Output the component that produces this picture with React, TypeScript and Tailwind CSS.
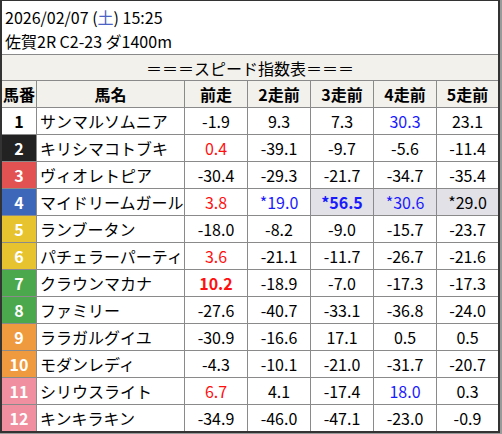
type Cell = { v: string; c?: "red" | "blue"; b?: boolean; hl?: boolean };

type Horse = { no: number; name: string; bg: string; fg: string; runs: Cell[] };

const horses: Horse[] = [
  { no: 1, name: "サンマルソムニア", bg: "bg-white", fg: "text-black", runs: [{ v: "-1.9" }, { v: "9.3" }, { v: "7.3" }, { v: "30.3", c: "blue" }, { v: "23.1" }] },
  { no: 2, name: "キリシマコトブキ", bg: "bg-[#222222]", fg: "text-white", runs: [{ v: "0.4", c: "red" }, { v: "-39.1" }, { v: "-9.7" }, { v: "-5.6" }, { v: "-11.4" }] },
  { no: 3, name: "ヴィオレトピア", bg: "bg-[#e25252]", fg: "text-white", runs: [{ v: "-30.4" }, { v: "-29.3" }, { v: "-21.7" }, { v: "-34.7" }, { v: "-35.4" }] },
  { no: 4, name: "マイドリームガール", bg: "bg-[#3d68ba]", fg: "text-white", runs: [{ v: "3.8", c: "red" }, { v: "*19.0", c: "blue" }, { v: "*56.5", c: "blue", b: true, hl: true }, { v: "*30.6", c: "blue", hl: true }, { v: "*29.0", hl: true }] },
  { no: 5, name: "ランブータン", bg: "bg-[#e6c32f]", fg: "text-white", runs: [{ v: "-18.0" }, { v: "-8.2" }, { v: "-9.0" }, { v: "-15.7" }, { v: "-23.7" }] },
  { no: 6, name: "パチェラーパーティ", bg: "bg-[#e6c32f]", fg: "text-white", runs: [{ v: "3.6", c: "red" }, { v: "-21.1" }, { v: "-11.7" }, { v: "-26.7" }, { v: "-21.6" }] },
  { no: 7, name: "クラウンマカナ", bg: "bg-[#4ca84c]", fg: "text-white", runs: [{ v: "10.2", c: "red", b: true }, { v: "-18.9" }, { v: "-7.0" }, { v: "-17.3" }, { v: "-17.3" }] },
  { no: 8, name: "ファミリー", bg: "bg-[#4ca84c]", fg: "text-white", runs: [{ v: "-27.6" }, { v: "-40.7" }, { v: "-33.1" }, { v: "-36.8" }, { v: "-24.0" }] },
  { no: 9, name: "ララガルグイユ", bg: "bg-[#ef9a3e]", fg: "text-white", runs: [{ v: "-30.9" }, { v: "-16.6" }, { v: "17.1" }, { v: "0.5" }, { v: "0.5" }] },
  { no: 10, name: "モダンレディ", bg: "bg-[#ef9a3e]", fg: "text-white", runs: [{ v: "-4.3" }, { v: "-10.1" }, { v: "-21.0" }, { v: "-31.7" }, { v: "-20.7" }] },
  { no: 11, name: "シリウスライト", bg: "bg-[#ef8fa0]", fg: "text-white", runs: [{ v: "6.7", c: "red" }, { v: "4.1" }, { v: "-17.4" }, { v: "18.0", c: "blue" }, { v: "0.3" }] },
  { no: 12, name: "キンキラキン", bg: "bg-[#ef8fa0]", fg: "text-white", runs: [{ v: "-34.9" }, { v: "-46.0" }, { v: "-47.1" }, { v: "-23.0" }, { v: "-0.9" }] },
];

const heads = ["前走", "2走前", "3走前", "4走前", "5走前"];

export default function App() {
  return (
    <div
      className="w-[502px] h-[434px] bg-[#9a9a9a] text-[16px] text-black"
      style={{ fontFamily: '"Noto Sans CJK JP", "Noto Sans", sans-serif' }}
    >
      <div className="w-[500px] h-[433px] border-l-2 border-t border-r-2 border-b-2 border-[#333333] bg-white flex flex-col">
        {/* race info */}
        <div className="h-[52px] px-[3px] pt-[4px] leading-[24px] border-b border-[#8a8a8a] box-content">
          <div>
            2026/02/07 (<span className="text-[#4a63c4]">土</span>) 15:25
          </div>
          <div>佐賀2R C2-23 ダ1400m</div>
        </div>

        <div className="h-[26px] bg-[#f2f1ec] flex items-center justify-center leading-none">
          ＝＝＝スピード指数表＝＝＝
        </div>

        <div className="grid grid-cols-[34px_147px_62px_62px_62px_62px_61px] auto-rows-[26px] gap-px bg-[#8a8a8a] border-t border-r border-[#8a8a8a]">
          <div className="bg-[#f2f1ec] flex items-center justify-center font-bold">馬番</div>
          <div className="bg-[#f2f1ec] flex items-center justify-center font-bold">馬名</div>
          {heads.map((h) => (
            <div key={h} className="bg-[#f2f1ec] flex items-center justify-center font-bold">
              {h}
            </div>
          ))}

          {horses.map((h) => (
            <Row key={h.no} horse={h} />
          ))}
        </div>
      </div>
    </div>
  );
}

function Row({ horse }: { horse: Horse }) {
  return (
    <>
      <div className={`${horse.bg} ${horse.fg} flex items-center justify-center font-bold`}>{horse.no}</div>
      <div className="bg-white flex items-center pl-[3px] whitespace-nowrap">{horse.name}</div>
      {horse.runs.map((r, i) => (
        <div
          key={i}
          className={`flex items-center justify-center ${r.hl ? "bg-[#e1e1e7]" : "bg-white"} ${
            r.c === "red" ? "text-[#ff1010]" : r.c === "blue" ? "text-[#1a1aff]" : ""
          } ${r.b ? "font-bold" : ""}`}
        >
          {r.v}
        </div>
      ))}
    </>
  );
}
